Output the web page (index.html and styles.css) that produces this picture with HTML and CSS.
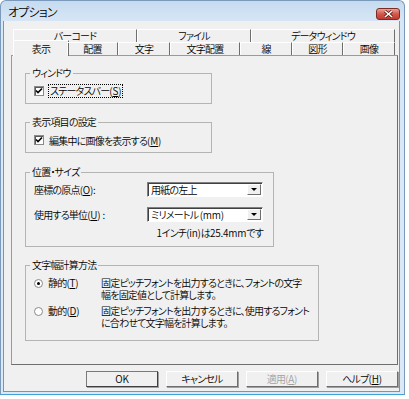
FILE: index.html
```html
<!DOCTYPE html>
<html lang="ja">
<head>
  <meta charset="UTF-8">
  <title>オプション</title>
  <link rel="stylesheet" href="styles.css">
</head>
<body>
  <div class="window">
    <div class="titlebar">
      <span class="title">オプション</span>
      <span class="close">
        <svg width="11" height="8" viewBox="0 0 11 8"><path d="M2 1 L9 7 M9 1 L2 7" stroke="#5a1a14" stroke-width="3"/><path d="M2 1 L9 7 M9 1 L2 7" stroke="#fff" stroke-width="1.6"/></svg>
      </span>
    </div>

    <div class="client">
      <div class="tabs">
        <div class="tab-row row-back">
          <div class="tab">バーコード</div>
          <div class="tab">ファイル</div>
          <div class="tab">データウィンドウ</div>
        </div>
        <div class="tab-row row-front">
          <div class="tab active">表示</div>
          <div class="tab">配置</div>
          <div class="tab">文字</div>
          <div class="tab">文字配置</div>
          <div class="tab">線</div>
          <div class="tab">図形</div>
          <div class="tab">画像</div>
        </div>
      </div>

      <div class="panel">
        <fieldset class="group narrow">
          <legend>ウィンドウ</legend>
          <div class="check">
            <span class="box"><svg width="8" height="8" viewBox="0 0 8 8"><path d="M1 3.5 L3 5.5 L7 1.5" fill="none" stroke="#000" stroke-width="1.6"/></svg></span>
            <span class="focus">ステータスバー<span class="en">(<u>S</u>)</span></span>
          </div>
        </fieldset>

        <fieldset class="group narrow">
          <legend>表示項目の設定</legend>
          <div class="check">
            <span class="box"><svg width="8" height="8" viewBox="0 0 8 8"><path d="M1 3.5 L3 5.5 L7 1.5" fill="none" stroke="#000" stroke-width="1.6"/></svg></span>
            <span>編集中に画像を表示する<span class="en">(<u>M</u>)</span></span>
          </div>
        </fieldset>

        <fieldset class="group g-pos">
          <legend>位置・サイズ</legend>
          <div class="pos-grid">
            <span>座標の原点<span class="en">(<u>O</u>):</span></span>
            <div class="combo"><span>用紙の左上</span><span class="arrow"></span></div>
            <span>使用する単位<span class="en">(<u>U</u>) :</span></span>
            <div class="combo"><span>ミリメートル <span class="en">(mm)</span></span><span class="arrow"></span></div>
          </div>
          <div class="note"><span class="en">1</span>インチ<span class="en">(in)</span>は<span class="en">25.4mm</span>です</div>
        </fieldset>

        <fieldset class="group g-width">
          <legend>文字幅計算方法</legend>
          <div class="radio-row">
            <div class="radio-label"><span class="radio on"></span><span>静的<span class="en">(<u>T</u>)</span></span></div>
            <div class="desc">固定ピッチフォントを出力するときに、フォントの文字<br>幅を固定値として計算します。</div>
          </div>
          <div class="radio-row">
            <div class="radio-label"><span class="radio"></span><span>動的<span class="en">(<u>D</u>)</span></span></div>
            <div class="desc">固定ピッチフォントを出力するときに、使用するフォント<br>に合わせて文字幅を計算します。</div>
          </div>
        </fieldset>
      </div>

      <div class="buttons">
        <div class="btn default en">OK</div>
        <div class="btn">キャンセル</div>
        <div class="btn disabled">適用<span class="en">(<u>A</u>)</span></div>
        <div class="btn">ヘルプ<span class="en">(<u>H</u>)</span></div>
      </div>
    </div>
  </div>
</body>
</html>
```

FILE: styles.css
```css
* {
  box-sizing: border-box;
}
body {
  margin: 0;
  background: #fff;
  font-family: "Noto Sans CJK JP", "Noto Sans", sans-serif;
  font-size: 10px;
  font-weight: 350;
  letter-spacing: -0.8px;
  color: #000;
  font-feature-settings: "palt";
}
.en {
  letter-spacing: -0.2px;
}
u {
  text-decoration: underline;
  text-underline-offset: 1px;
}

/* window frame */
.window {
  width: 405px;
  height: 395px;
  display: flex;
  flex-direction: column;
  padding: 0 4px 2px 2px;
  border: 1px solid #7b99bb;
  border-bottom-color: #3ea2d9;
  border-radius: 6px 6px 0 0;
  background: linear-gradient(#c6dbf0, #d8e7f6 22px, #dbe9f7);
}
.titlebar {
  height: 20px;
  display: flex;
  align-items: center;
}
.title {
  margin-left: 5px;
  font-size: 12px;
}
.close {
  margin-left: auto;
  align-self: flex-start;
  margin-top: 7px;
  width: 24px;
  height: 12px;
  display: flex;
  align-items: center;
  justify-content: center;
  border: 1px solid #7b2d25;
  border-radius: 3px;
  background: linear-gradient(#e9a397, #d2584b 50%, #c23c2f);
}

.client {
  flex: 1;
  display: flex;
  flex-direction: column;
  background: #f0f0f0;
  border: 1px solid #8f8f8f;
  border-top: none;
  padding: 8px 1px 0 7px;
}

/* tabs */
.tabs {
  position: relative;
  z-index: 1;
}
.tab-row {
  display: grid;
  height: 13px;
}
.row-back {
  grid-template-columns: 124px 114px 144px;
  margin-left: 2px;
}
.row-front {
  grid-template-columns: 52px 51px 52px 70px 52px 51px 52px;
  margin-left: 4px;
}
.tab {
  border-top: 1px solid #fff;
  border-left: 1px solid #fff;
  border-right: 1px solid #6e6e6e;
  text-align: center;
  line-height: 12px;
  white-space: nowrap;
}
.tab.active {
  margin: -2px -2px -1px;
  height: 16px;
  background: #f0f0f0;
  line-height: 15px;
}

.panel {
  height: 310px;
  border: 1px solid #9a9a9a;
  border-right-color: #6e6e6e;
  border-bottom-color: #6e6e6e;
  padding: 11px 0 0 13px;
}

/* group boxes */
.group {
  margin: 0;
  padding: 5px 8px;
  border: 1px solid #b4b4b4;
}
.group legend {
  padding: 0 2px;
  margin-left: -4px;
  line-height: 12px;
}
.group + .group {
  margin-top: 12px;
}
.narrow {
  width: 187px;
}
.g-pos {
  width: 249px;
  padding: 4px 9px 7px 8px;
  margin-top: 13px !important;
}
.g-width {
  width: 294px;
  padding: 6px 8px 11px 8px;
}

.check {
  display: flex;
  align-items: center;
  height: 14px;
  gap: 5px;
  white-space: nowrap;
}
.box {
  width: 10px;
  height: 10px;
  display: flex;
  align-items: center;
  justify-content: center;
  background: #fff;
  border: 1px solid #8a8a8a;
  box-shadow: inset 1px 1px 0 #5a5a5a;
}
.focus {
  outline: 1px dotted #000;
  padding: 0 1px;
  line-height: 12px;
}

.pos-grid {
  display: grid;
  grid-template-columns: 113px 116px;
  row-gap: 10px;
  align-items: center;
  white-space: nowrap;
}
.combo {
  height: 15px;
  display: flex;
  align-items: center;
  padding-left: 3px;
  background: #fff;
  border: 1px solid;
  border-color: #808080 #fff #fff #808080;
  box-shadow: inset 1px 1px 0 #404040;
}
.combo .arrow {
  margin-left: auto;
  margin-right: 1px;
  width: 14px;
  height: 11px;
  background: #f0f0f0;
  border: 1px solid;
  border-color: #fff #6e6e6e #6e6e6e #fff;
  position: relative;
}
.combo .arrow::after {
  content: '';
  position: absolute;
  left: 3px;
  top: 3px;
  border-left: 3px solid transparent;
  border-right: 3px solid transparent;
  border-top: 3px solid #000;
}
.note {
  margin-top: 5px;
  width: 229px;
  text-align: right;
  line-height: 12px;
}

.radio-row {
  display: grid;
  grid-template-columns: 67px auto;
  line-height: 12px;
  white-space: nowrap;
}
.radio-row + .radio-row {
  margin-top: 4px;
}
.radio-label {
  display: flex;
  align-items: center;
  gap: 5px;
  height: 12px;
}
.radio {
  width: 9px;
  height: 9px;
  border-radius: 50%;
  background: #fff;
  border: 1px solid #8a8a8a;
  display: flex;
  align-items: center;
  justify-content: center;
}
.radio.on::after {
  content: '';
  width: 3px;
  height: 3px;
  border-radius: 50%;
  background: #000;
}

/* dialog buttons */
.buttons {
  display: flex;
  justify-content: flex-end;
  gap: 8px;
  margin-top: 6px;
}
.btn {
  width: 72px;
  height: 16px;
  text-align: center;
  line-height: 14px;
  background: #f0f0f0;
  border: 1px solid;
  border-color: #fff #6e6e6e #6e6e6e #fff;
  box-shadow: 1px 1px 0 #a0a0a0;
}
.btn.default {
  border-color: #7a7a7a #404040 #404040 #7a7a7a;
}
.btn.disabled {
  color: #a0a0a0;
}
```
